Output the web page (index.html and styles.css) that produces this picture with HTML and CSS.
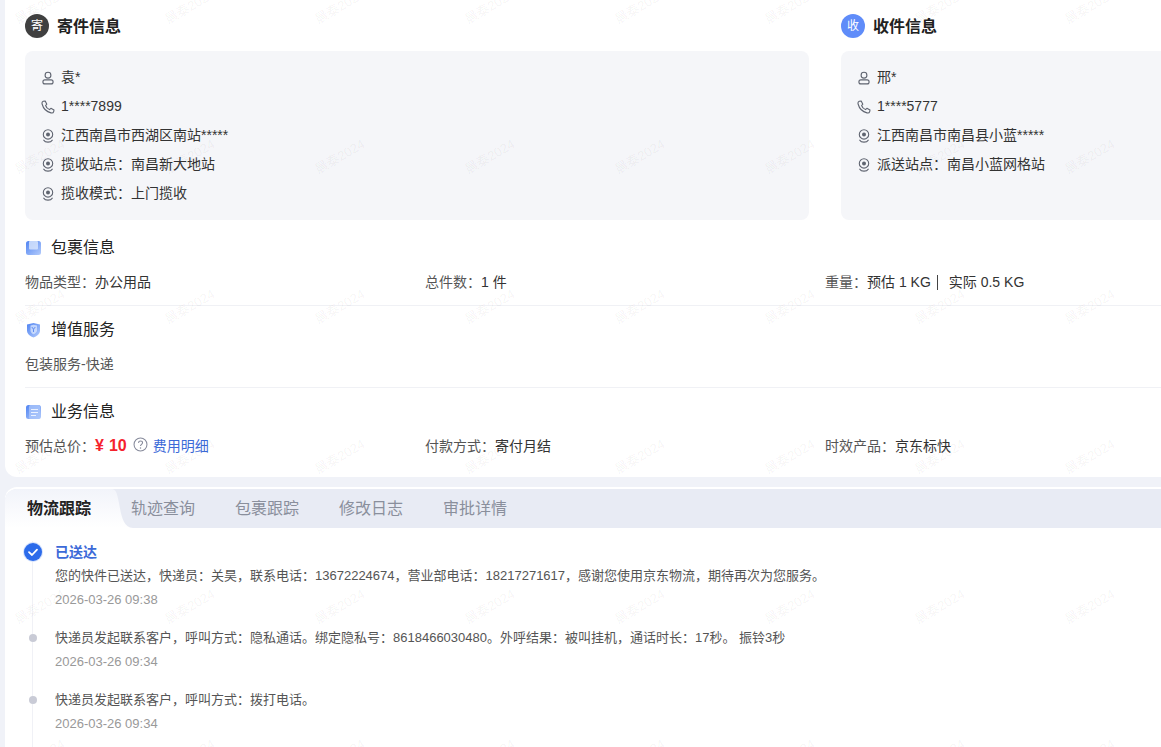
FILE: index.html
```html
<!DOCTYPE html>
<html lang="zh-CN">
<head>
<meta charset="utf-8">
<title>运单详情</title>
<link rel="stylesheet" href="styles.css">
</head>
<body>
<svg class="defs" width="0" height="0" aria-hidden="true">
  <defs>
    <linearGradient id="blue" x1="0" y1="0" x2="1" y2="1"><stop offset="0" stop-color="#4f83f2"/><stop offset="1" stop-color="#b4ccfb"/></linearGradient>
    <linearGradient id="tabfill" x1="0" y1="0" x2="0" y2="1"><stop offset="0" stop-color="#f2f4fa"/><stop offset="1" stop-color="#ffffff"/></linearGradient>
    <symbol id="i-person" viewBox="0 0 14 14"><circle cx="7" cy="4.2" r="2.9" fill="none" stroke="#5f6470" stroke-width="1.1"/><rect x="1.9" y="8.9" width="10.2" height="4" rx="2" fill="none" stroke="#5f6470" stroke-width="1.1"/></symbol>
    <symbol id="i-phone" viewBox="0 0 14 14"><path d="M2.2 1.3 L4.2 1 L5.8 4.2 L4.6 5.5 C5.2 7.4 6.6 8.9 8.5 9.6 L9.9 8.3 L13 9.9 L12.7 11.6 C12.4 12.7 11.2 13.2 10 12.9 C5.8 11.9 2.2 8.2 1.1 4 C0.8 2.8 1.2 1.7 2.2 1.3 Z" fill="none" stroke="#5f6470" stroke-width="1.1" stroke-linejoin="round"/></symbol>
    <symbol id="i-loc" viewBox="0 0 14 14"><circle cx="7" cy="5.4" r="4.7" fill="none" stroke="#5f6470" stroke-width="1.1"/><circle cx="7" cy="5.4" r="2" fill="#5f6470"/><path d="M2.8 11.2 C4.2 13.8 9.8 13.8 11.2 11.2" fill="none" stroke="#5f6470" stroke-width="1.2" stroke-linecap="round"/></symbol>
  </defs>
</svg>
<div class="page">
  <section class="card info">
    <div class="parties">
      <div class="party">
        <h2 class="party-title"><span class="badge badge-dark">寄</span><span class="party-name">寄件信息</span></h2>
        <ul class="panel">
          <li class="panel-row"><svg class="ico"><use href="#i-person"/></svg>袁*</li>
          <li class="panel-row"><svg class="ico"><use href="#i-phone"/></svg>1****7899</li>
          <li class="panel-row"><svg class="ico"><use href="#i-loc"/></svg>江西南昌市西湖区南站*****</li>
          <li class="panel-row"><svg class="ico"><use href="#i-loc"/></svg>揽收站点：南昌新大地站</li>
          <li class="panel-row"><svg class="ico"><use href="#i-loc"/></svg>揽收模式：上门揽收</li>
        </ul>
      </div>
      <div class="party">
        <h2 class="party-title"><span class="badge badge-blue">收</span><span class="party-name">收件信息</span></h2>
        <ul class="panel">
          <li class="panel-row"><svg class="ico"><use href="#i-person"/></svg>邢*</li>
          <li class="panel-row"><svg class="ico"><use href="#i-phone"/></svg>1****5777</li>
          <li class="panel-row"><svg class="ico"><use href="#i-loc"/></svg>江西南昌市南昌县小蓝*****</li>
          <li class="panel-row"><svg class="ico"><use href="#i-loc"/></svg>派送站点：南昌小蓝网格站</li>
        </ul>
      </div>
    </div>

    <div class="block">
      <h3 class="block-title">
        <svg class="block-ico" viewBox="0 0 16 16"><rect x="0" y="1" width="15" height="14" rx="2.5" fill="url(#blue)"/><rect x="3" y="1" width="9" height="8.5" rx="1" fill="#dbe7fd" opacity=".8"/></svg>
        包裹信息
      </h3>
      <div class="fields">
        <div><span class="label">物品类型：</span>办公用品</div>
        <div><span class="label">总件数：</span>1 件</div>
        <div><span class="label">重量：</span>预估 1 KG<span class="sep"></span>实际 0.5 KG</div>
      </div>
    </div>

    <div class="block">
      <h3 class="block-title">
        <svg class="block-ico" viewBox="0 0 16 16"><path d="M7.5 1 L14 2.6 V8.5 C14 12 10.5 14.4 7.5 15.4 C4.5 14.4 1 12 1 8.5 V2.6 Z" fill="url(#blue)"/><path d="M4.5 3.4 L7.5 2.8 L11 3.4 V8.5 C11 10.5 9 11.6 7.5 12.2 C6 11.6 4.5 10.5 4.5 8.5 Z" fill="#dbe7fd" opacity=".75"/><path d="M5.8 5 L7.5 7.2 L9.3 5 M7.5 7.2 V10" fill="none" stroke="#5f8cf0" stroke-width="1"/></svg>
        增值服务
      </h3>
      <div class="fields"><div><span class="label">包装服务-快递</span></div></div>
    </div>

    <div class="block block-last">
      <h3 class="block-title">
        <svg class="block-ico" viewBox="0 0 16 16"><rect x="0" y="1" width="15" height="14" rx="2.5" fill="url(#blue)"/><rect x="3" y="1" width="11" height="14" rx="1.5" fill="#a9c4fa" opacity=".8"/><path d="M5 5.5 H12 M5 8.5 H12 M5 11.5 H10" stroke="#eaf1ff" stroke-width="1.2"/></svg>
        业务信息
      </h3>
      <div class="fields">
        <div class="price-line"><span class="label">预估总价：</span><strong class="price"><span class="yen">¥</span>10</strong>
          <svg class="help" viewBox="0 0 16 16"><circle cx="8" cy="8" r="6.9" fill="none" stroke="#85899a" stroke-width="1.1"/><path d="M5.9 6.3 C5.9 4.9 7 4.2 8 4.2 C9.2 4.2 10.2 5 10.2 6.2 C10.2 7.8 8 7.9 8 9.6" fill="none" stroke="#85899a" stroke-width="1.1"/><circle cx="8" cy="11.6" r=".8" fill="#85899a"/></svg>
          <a class="link">费用明细</a></div>
        <div><span class="label">付款方式：</span>寄付月结</div>
        <div><span class="label">时效产品：</span>京东标快</div>
      </div>
    </div>
  </section>

  <section class="card track">
    <nav class="tabs">
      <span class="tab tab-active">物流跟踪
        <svg class="tab-curve" viewBox="0 0 22 39" width="22" height="39"><path d="M0 0 C6 0 6 6 8 14 C10 25 12 39 22 39 L0 39 Z" fill="url(#tabfill)"/></svg>
      </span>
      <span class="tab">轨迹查询</span>
      <span class="tab">包裹跟踪</span>
      <span class="tab">修改日志</span>
      <span class="tab">审批详情</span>
    </nav>
    <ol class="timeline">
      <li class="step">
        <svg class="step-check" viewBox="0 0 20 20"><circle cx="10" cy="10" r="10" fill="#d5e2fc"/><circle cx="10" cy="10" r="9" fill="#2c6bea"/><path d="M6 10.2 L9 13 L14 7.6" fill="none" stroke="#fff" stroke-width="1.8" stroke-linecap="round" stroke-linejoin="round"/></svg>
        <div class="step-title">已送达</div>
        <div class="step-text">您的快件已送达，快递员：关昊，联系电话：13672224674，营业部电话：18217271617，感谢您使用京东物流，期待再次为您服务。</div>
        <div class="step-date">2026-03-26 09:38</div>
      </li>
      <li class="step">
        <span class="step-dot"></span>
        <div class="step-text">快递员发起联系客户，呼叫方式：隐私通话。绑定隐私号：8618466030480。外呼结果：被叫挂机，通话时长：17秒。 振铃3秒</div>
        <div class="step-date">2026-03-26 09:34</div>
      </li>
      <li class="step">
        <span class="step-dot"></span>
        <div class="step-text">快递员发起联系客户，呼叫方式：拨打电话。</div>
        <div class="step-date">2026-03-26 09:34</div>
      </li>
    </ol>
  </section>
</div>
<div class="marks" aria-hidden="true">
  <span>晨泰2024</span><span>晨泰2024</span><span>晨泰2024</span><span>晨泰2024</span><span>晨泰2024</span><span>晨泰2024</span><span>晨泰2024</span><span>晨泰2024</span>
  <span>晨泰2024</span><span>晨泰2024</span><span>晨泰2024</span><span>晨泰2024</span><span>晨泰2024</span><span>晨泰2024</span><span>晨泰2024</span><span>晨泰2024</span>
  <span>晨泰2024</span><span>晨泰2024</span><span>晨泰2024</span><span>晨泰2024</span><span>晨泰2024</span><span>晨泰2024</span><span>晨泰2024</span><span>晨泰2024</span>
  <span>晨泰2024</span><span>晨泰2024</span><span>晨泰2024</span><span>晨泰2024</span><span>晨泰2024</span><span>晨泰2024</span><span>晨泰2024</span><span>晨泰2024</span>
  <span>晨泰2024</span><span>晨泰2024</span><span>晨泰2024</span><span>晨泰2024</span><span>晨泰2024</span><span>晨泰2024</span><span>晨泰2024</span><span>晨泰2024</span>
  <span>晨泰2024</span><span>晨泰2024</span><span>晨泰2024</span><span>晨泰2024</span><span>晨泰2024</span><span>晨泰2024</span><span>晨泰2024</span><span>晨泰2024</span>
</div>
</body>
</html>
```

FILE: styles.css
```css
* { box-sizing: border-box; }
html, body { height: 100%; }
body {
  margin: 0;
  overflow: hidden;
  position: relative;
  background: #f0f2f8;
  color: #333;
  font: 14px/22px "Liberation Sans", "Noto Sans CJK SC", sans-serif;
}
h2, h3, ul, ol { margin: 0; padding: 0; list-style: none; }
.defs { position: absolute; }

.page { width: 1645px; padding-left: 5px; margin-top: -10px; }
.card { background: #fff; border-radius: 12px; }

.info { padding: 24px 20px 8px; }
.parties { display: grid; grid-template-columns: 784px 784px; gap: 32px; margin-bottom: 4px; }
.party-title {
  display: flex; align-items: center; gap: 8px;
  height: 24px; margin-bottom: 13px;
  font-size: 16px; line-height: 24px; font-weight: 700; color: #222;
}
.party-name { padding-top: 2px; }
.badge {
  width: 24px; height: 24px; border-radius: 50%;
  display: flex; align-items: center; justify-content: center;
  color: #fff; font-size: 12px; font-weight: 400;
}
.badge-dark { background: #404040; }
.badge-blue { background: #5f8cf9; }
.panel { height: 169px; padding: 11px 16px 13px; background: #f5f6f9; border-radius: 8px; }
.panel-row { display: flex; align-items: center; gap: 6px; height: 29px; }
.ico { width: 14px; height: 14px; flex: none; margin-top: 3px; }

.block { padding: 11px 0 12px; border-bottom: 1px solid #f0f1f5; }
.block-last { border-bottom: 0; }
.block-title {
  display: flex; align-items: center; gap: 9px;
  height: 24px; margin-bottom: 12px; padding-top: 2px;
  font-size: 16px; line-height: 24px; font-weight: 400; color: #222;
}
.block-ico { width: 16px; height: 16px; flex: none; margin-left: 1px; }
.fields { display: grid; grid-template-columns: repeat(4, 400px); }
.label { color: #555; }
.sep { display: inline-block; width: 1px; height: 15px; margin: 0 11px 0 6px; background: #444; vertical-align: -3px; }
.price-line { display: flex; align-items: center; }
.price { color: #f5222d; font-size: 16px; }
.yen { font-size: 16px; margin-right: 5px; }
.help { width: 15px; height: 15px; margin: -4px 5px 0 6px; }
.link { color: #3c6ad8; }

.track { margin-top: 10px; padding-top: 2px; height: 400px; }
.tabs { display: flex; height: 39px; background: #e8ebf4; border-radius: 12px 12px 0 0; }
.tab { position: relative; padding: 0 20px; font-size: 16px; line-height: 39px; color: #8a8f9c; }
.tab-active {
  padding-left: 22px;
  color: #222; font-weight: 700;
  background: linear-gradient(#f2f4fa, #fff);
  border-radius: 12px 0 0 0;
}
.tab-curve { position: absolute; left: 100%; top: 0; }

.timeline { padding: 13px 0 0 20px; }
.step { position: relative; padding: 0 0 16px 30px; font-size: 13px; }
.step::before { content: ""; position: absolute; left: 7px; top: 0; bottom: 0; width: 1px; background: #f0f1f6; }
.step-check { position: absolute; left: -2px; top: 1px; width: 20px; height: 20px; }
.step-dot { position: absolute; left: 4px; top: 7px; width: 8px; height: 8px; border-radius: 50%; background: #c9cbd6; }
.step-title { margin-bottom: 2px; color: #3c6ad8; font-size: 14px; font-weight: 700; }
.step-text { color: #555; }
.step-date { margin-top: 2px; color: #999; }

.marks {
  position: absolute; left: -35px; top: -68px;
  display: grid; grid-template-columns: repeat(8, 150px); grid-auto-rows: 150px;
  pointer-events: none;
}
.marks span {
  display: flex; align-items: center; justify-content: center;
  font-size: 13px; color: rgba(0, 0, 0, .05);
  transform: rotate(-30deg);
}
```
